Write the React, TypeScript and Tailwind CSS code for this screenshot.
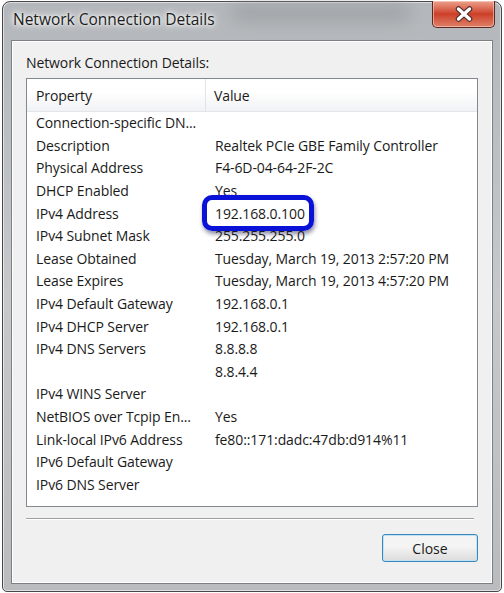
import React from "react";

const rows: [string, string][] = [
  ["Connection-specific DN...", ""],
  ["Description", "Realtek PCIe GBE Family Controller"],
  ["Physical Address", "F4-6D-04-64-2F-2C"],
  ["DHCP Enabled", "Yes"],
  ["IPv4 Address", "192.168.0.100"],
  ["IPv4 Subnet Mask", "255.255.255.0"],
  ["Lease Obtained", "Tuesday, March 19, 2013 2:57:20 PM"],
  ["Lease Expires", "Tuesday, March 19, 2013 4:57:20 PM"],
  ["IPv4 Default Gateway", "192.168.0.1"],
  ["IPv4 DHCP Server", "192.168.0.1"],
  ["IPv4 DNS Servers", "8.8.8.8"],
  ["", "8.8.4.4"],
  ["IPv4 WINS Server", ""],
  ["NetBIOS over Tcpip En...", "Yes"],
  ["Link-local IPv6 Address", "fe80::171:dadc:47db:d914%11"],
  ["IPv6 Default Gateway", ""],
  ["IPv6 DNS Server", ""],
];

export default function App() {
  return (
    <div
      className="w-[504px] h-[593px] bg-white pt-[1px] pl-[2px] overflow-hidden"
      style={{ fontFamily: '"Open Sans", "Noto Sans", sans-serif' }}
    >
      <div className="relative w-[500px] h-[591px] rounded-t-[8px] rounded-b-[5px] border border-[#45474a] bg-gradient-to-b from-[#b3b7bb] via-[#c6c8ca] to-[#b9bbbd] shadow-[inset_0_0_0_1px_rgba(255,255,255,0.55)] flex flex-col px-[8px] pb-[7px]">
        {/* title bar */}
        <div className="relative h-[38px] flex items-center pl-[2px] shrink-0">
          <div className="absolute left-[220px] top-[2px] w-[180px] h-[18px] rounded-full bg-[#9a9ea2] blur-[8px] opacity-70" />
          <span
            className="relative text-[15.5px] text-[#1b1b1b] mt-[-2px]"
            style={{ textShadow: "0 0 10px #fff, 0 0 6px #fff, 0 0 3px #fff" }}
          >
            Network Connection Details
          </span>
          <div className="absolute right-[-2px] top-[-1px] w-[63px] h-[27px] rounded-b-[5px] border border-[#5a2a22] border-t-0 bg-gradient-to-b from-[#eba08e] via-[#cc3e27] to-[#e08068] shadow-[inset_0_0_0_1px_rgba(255,220,210,0.55)] flex items-center justify-center">
            <svg width="20" height="16" viewBox="0 0 20 16">
              <path d="M4.5 3 L15.5 13 M15.5 3 L4.5 13" stroke="#4a2a28" strokeWidth="5.5" strokeLinecap="round" />
              <path d="M4.5 3 L15.5 13 M15.5 3 L4.5 13" stroke="#ffffff" strokeWidth="3.4" strokeLinecap="round" />
            </svg>
          </div>
        </div>

        {/* content */}
        <div className="flex-1 border border-[#7c8084] bg-[#f0f0f0] shadow-[inset_0_0_0_1px_#ffffff] flex flex-col px-[14px]">
          <div className="pt-[12px] pb-[5px] leading-[20px] text-[14px] text-[#1a1a1a] tracking-[-0.1px]">
            Network Connection Details:
          </div>

          <div className="h-[429px] border border-[#828790] bg-white flex flex-col text-[14px] text-[#1a1a1a] tracking-[-0.1px]">
            <div className="h-[33px] shrink-0 flex bg-gradient-to-b from-white from-40% to-[#f1f2f4] border-b border-[#e3e5e8]">
              <div className="w-[179px] pl-[9px] flex items-center border-r border-[#e1e3e6]">Property</div>
              <div className="flex-1 pl-[8px] flex items-center">Value</div>
            </div>
            {rows.map(([k, v], i) => (
              <div key={i} className="h-[22.6px] shrink-0 flex items-center leading-[20px]">
                <div className="w-[179px] pl-[9px] whitespace-nowrap">{k}</div>
                <div className="relative flex-1 pl-[9px] whitespace-nowrap">
                  {v}
                  {k === "IPv4 Address" && (
                    <span className="absolute left-[-4px] top-[-9px] w-[112px] h-[36px] rounded-[10px] border-[5px] border-[#0a12d8] shadow-[1px_3px_4px_rgba(0,0,60,0.45)]" />
                  )}
                </div>
              </div>
            ))}
          </div>

          <div className="mt-[11px] mr-[4px] h-[2px] border-t border-[#a0a0a0] border-b border-b-white" />

          <div className="mt-[14px] flex justify-end">
            <button className="w-[96px] h-[28px] rounded-[3px] border border-[#3c86b8] bg-gradient-to-b from-[#f4f4f4] from-45% to-[#dcdcdc] shadow-[inset_0_0_0_1px_#bfe4f7] text-[14px] text-[#1a1a1a]">
              Close
            </button>
          </div>
        </div>
      </div>
    </div>
  );
}
